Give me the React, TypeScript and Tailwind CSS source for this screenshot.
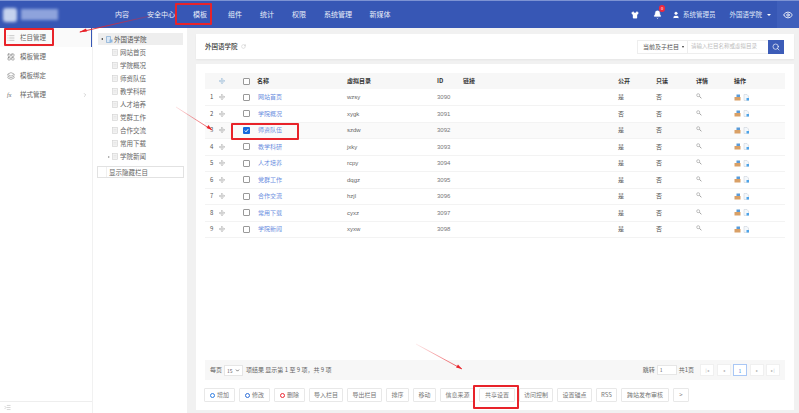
import React from "react";
import { Shirt, Bell, User, Eye, Search, List, LayoutGrid, Layers, ChevronRight, RotateCw, Move, IndentIncrease, ChevronDown } from "lucide-react";

const navItems = [
  { label: "内容", w: "w-[38px]" },
  { label: "安全中心", w: "w-[40px]" },
  { label: "模板", w: "w-[38px]" },
  { label: "组件", w: "w-[32px]" },
  { label: "统计", w: "w-[32px]" },
  { label: "权限", w: "w-[32px]" },
  { label: "系统管理", w: "w-[46px]" },
  { label: "新媒体", w: "w-[38px]" },
];

const rows = [
  { no: 1, name: "网站首页", dir: "wzsy", id: 3090, pub: "是" },
  { no: 2, name: "学院概况", dir: "xygk", id: 3091, pub: "否" },
  { no: 3, name: "师资队伍", dir: "szdw", id: 3092, pub: "是", checked: true },
  { no: 4, name: "教学科研", dir: "jxky", id: 3093, pub: "是" },
  { no: 5, name: "人才培养", dir: "rcpy", id: 3094, pub: "是" },
  { no: 6, name: "党群工作", dir: "dqgz", id: 3095, pub: "是" },
  { no: 7, name: "合作交流", dir: "hzjl", id: 3096, pub: "是" },
  { no: 8, name: "常用下载", dir: "cyxz", id: 3097, pub: "是" },
  { no: 9, name: "学院新闻", dir: "xyxw", id: 3098, pub: "是" },
];

const treeItems = ["网站首页", "学院概况", "师资队伍", "教学科研", "人才培养", "党群工作", "合作交流", "常用下载", "学院新闻"];

const actions = [
  { label: "增加", w: "w-[31px]", dot: "border-[#2f7de1]" },
  { label: "修改", w: "w-[31px]", dot: "border-[#2f6fd8]" },
  { label: "删除", w: "w-[31px]", dot: "border-[#ee2a35]" },
  { label: "导入栏目", w: "w-[34px]" },
  { label: "导出栏目", w: "w-[35px]" },
  { label: "排序", w: "w-[23px]" },
  { label: "移动", w: "w-[23px]" },
  { label: "信息来源", w: "w-[35px]" },
  { label: "共享设置", w: "w-[36px]" },
  { label: "访问控制", w: "w-[34px]" },
  { label: "设置锚点", w: "w-[35px]" },
  { label: "RSS", w: "w-[21px]" },
  { label: "跨站发布审核", w: "w-[48px]" },
  { label: ">", w: "w-[16px]" },
];

const PageIcon = () => (
  <svg width="6" height="7" viewBox="0 0 6 7" className="shrink-0">
    <rect x="0.5" y="0.5" width="5" height="6" fill="#f2f2f2" stroke="#d0d0d0" strokeWidth="0.6" />
    <path d="M1.5 2.5h3M1.5 4h3" stroke="#dcdcdc" strokeWidth="0.5" />
  </svg>
);

const OpIcons = () => (
  <div className="flex items-center gap-[1.5px]">
    <svg width="7" height="7" viewBox="0 0 7 7">
      <rect x="2.5" y="0.5" width="3.5" height="3" fill="#5b9bd8" />
      <rect x="0.5" y="3" width="6" height="3.5" fill="#d9a066" />
    </svg>
    <svg width="7" height="7" viewBox="0 0 7 7">
      <path d="M1 .5h3l1.5 1.5v4.5H1z" fill="#f4f8fc" stroke="#c4ccd6" strokeWidth="0.5" />
      <rect x="3.5" y="4" width="2.5" height="2.5" fill="#4da3e8" />
    </svg>
  </div>
);

const MagIcon = () => (
  <svg width="6" height="6" viewBox="0 0 6 6" className="-mt-[2px]">
    <circle cx="2.2" cy="2.2" r="1.5" fill="none" stroke="#a8a8a8" strokeWidth="0.7" />
    <path d="M3.4 3.4 5.4 5.2" stroke="#909090" strokeWidth="0.9" />
  </svg>
);

const Annotations = () => (
  <>
    <div className="absolute left-[175px] top-[3px] w-[37px] h-[22px] border-2 border-[#e8232a] rounded-[1px]" />
    <div className="absolute left-[4px] top-[28px] w-[50px] h-[18px] border-2 border-[#e8232a] rounded-[1px]" />
    <div className="absolute left-[231px] top-[123px] w-[68px] h-[17px] border-2 border-[#e8232a] rounded-[1px]" />
    <div className="absolute left-[473px] top-[385px] w-[46px] h-[24px] border-2 border-[#e8232a] rounded-[1px]" />
    <svg className="absolute inset-0 pointer-events-none" width="799" height="413" viewBox="0 0 799 413">
      <defs>
        <linearGradient id="a1" gradientUnits="userSpaceOnUse" x1="150" y1="16" x2="80" y2="32">
          <stop offset="0" stopColor="#e8232a" stopOpacity="0.3" />
          <stop offset="1" stopColor="#e8232a" />
        </linearGradient>
        <linearGradient id="a2" gradientUnits="userSpaceOnUse" x1="176" y1="107" x2="212" y2="130">
          <stop offset="0" stopColor="#e8232a" stopOpacity="0.15" />
          <stop offset="1" stopColor="#e8232a" />
        </linearGradient>
        <linearGradient id="a3" gradientUnits="userSpaceOnUse" x1="416" y1="344" x2="462" y2="369">
          <stop offset="0" stopColor="#e8232a" stopOpacity="0.1" />
          <stop offset="1" stopColor="#e8232a" />
        </linearGradient>
      </defs>
      <path d="M150 16 80 32" stroke="url(#a1)" strokeWidth="1.2" fill="none" />
      <path d="M79 32.2 86 28.5 87 31.5Z" fill="#e8232a" />
      <path d="M176 107 212 130" stroke="url(#a2)" strokeWidth="0.8" fill="none" />
      <path d="M212 130 206.5 128 208.5 125Z" fill="#e8232a" />
      <path d="M416 344 462 369" stroke="url(#a3)" strokeWidth="0.8" fill="none" />
      <path d="M462 369 456 367.5 458 364.5Z" fill="#e8232a" />
    </svg>
  </>
);

export default function App() {
  return (
    <div className="relative w-[799px] h-[413px] overflow-hidden bg-[#f1f1f1] text-[#666] text-[6px] leading-none font-['Noto_Sans_CJK_SC','Noto_Sans',sans-serif]">
      {/* top bar */}
      <header className="h-[28px] flex items-center bg-[#3757b5] border-t border-[#7d93d3] text-white">
        <div className="w-[103px] h-full flex items-center pl-[3px] gap-[4px] blur-[1.5px]">
          <div className="w-[14px] h-[14px] rounded-[3px] bg-[#c5d2ee]" />
          <div className="w-[37px] h-[11px] bg-[#8ea3dc]" />
        </div>
        <nav className="flex items-center h-full text-[7px] text-[#e9eef9]">
          {navItems.map((n) => (
            <div key={n.label} className={`${n.w} text-center whitespace-nowrap`}>
              {n.label}
            </div>
          ))}
        </nav>
        <div className="ml-auto flex items-center h-full">
          <Shirt size={8} fill="white" strokeWidth={1} />
          <div className="relative ml-[14px] mr-[10px]">
            <Bell size={9} fill="white" strokeWidth={1} />
            <span className="absolute -top-[5px] -right-[3px] w-[6px] h-[7px] rounded-full bg-[#f0283c] text-[4px] text-center leading-[7px]">0</span>
          </div>
          <User size={8} fill="white" strokeWidth={1} className="mr-[3px]" />
          <span className="text-[6.5px] text-[#dfe6f7] whitespace-nowrap">系统管理员</span>
          <span className="ml-[14px] text-[6.5px] text-[#dfe6f7] whitespace-nowrap">外国语学院</span>
          <span className="ml-[5px] mr-[6px] w-0 h-0 border-x-[2px] border-x-transparent border-t-[2.5px] border-t-white" />
          <div className="w-[22px] h-full bg-[#3f5fbb] flex items-center justify-center">
            <Eye size={10} strokeWidth={2} />
          </div>
        </div>
      </header>

      <div className="flex h-[385px]">
        {/* side menu */}
        <aside className="w-[92px] bg-white flex flex-col text-[6.5px] text-[#666] shadow-[1px_0_2px_rgba(0,0,0,0.05)]">
          <div className="h-[19px] flex items-center pl-[7px] gap-[5px] border-r border-[#3757b5] bg-[#fafafa]">
            <List size={8} strokeWidth={1} />
            <span>栏目管理</span>
          </div>
          <div className="h-[19px] flex items-center pl-[7px] gap-[5px]">
            <LayoutGrid size={8} strokeWidth={1.5} />
            <span>模板管理</span>
          </div>
          <div className="h-[19px] flex items-center pl-[7px] gap-[5px]">
            <Layers size={8} strokeWidth={1.5} />
            <span>模板绑定</span>
          </div>
          <div className="h-[19px] flex items-center pl-[7px] gap-[5px]">
            <span className="w-[8px] text-[6px] italic font-['Liberation_Serif',serif]">fx</span>
            <span>样式管理</span>
            <ChevronRight size={6} className="ml-auto mr-[4px] text-[#aaa]" />
          </div>
          <div className="mt-auto h-[12px] border-t border-[#eee] pl-[4px] flex items-center">
            <IndentIncrease size={7} strokeWidth={1} className="text-[#777]" />
          </div>
        </aside>

        {/* tree */}
        <section className="w-[95px] bg-white pt-[5px] pl-[5px] border-l border-[#f1f1f1]">
          <div className="w-[85px] h-[12px] bg-[#eeeeee] flex items-center pl-[3px] text-[6.5px] text-[#555]">
            <span className="w-0 h-0 border-y-[1.5px] border-y-transparent border-r-[2px] border-r-[#333] mr-[3px]" />
            <svg width="7" height="7" viewBox="0 0 7 7" className="mr-[1px]">
              <path d="M.5.5h4v6h-4z" fill="#dce8f5" stroke="#6f9fd0" strokeWidth="0.6" />
              <rect x="3.5" y="3.5" width="3" height="3" fill="#8fb8e0" />
            </svg>
            外国语学院
          </div>
          <ul className="pt-[1px]">
            {treeItems.map((t, i) => (
              <li key={t} className="h-[13px] flex items-center pl-[14px] gap-[2px] relative text-[6.5px] text-[#666]">
                {i === 8 && (
                  <span className="absolute left-[10px] w-0 h-0 border-y-[1.5px] border-y-transparent border-l-[2px] border-l-[#999]" />
                )}
                <PageIcon />
                {t}
              </li>
            ))}
          </ul>
          <div className="mt-[3px] -ml-[1px] w-[87px] h-[12px] border border-[#e2e2e2] flex items-center text-[6.5px] text-[#666]">
            <span className="w-[9px] h-full border-r border-[#f0f0f0] mr-[2px]" />
            显示隐藏栏目
          </div>
        </section>

        {/* main */}
        <main className="flex-1 pl-[9px] pr-[5px] pt-[6px] pb-[3px] flex flex-col gap-[5px]">
          <div className="h-[25px] bg-white flex items-center pl-[9px] pr-[10px] shadow-[0_1px_2px_rgba(0,0,0,0.05)]">
            <span className="text-[6.5px] text-[#333] font-medium">外国语学院</span>
            <RotateCw size={5} className="ml-[3px] text-[#bbb]" />
            <div className="ml-auto flex h-[14px] items-stretch">
              <div className="w-[51px] border border-[#eee] flex items-center pl-[5px] text-[6px] text-[#555] whitespace-nowrap">
                当前及子栏目
                <span className="ml-[3px] w-0 h-0 border-x-[1.5px] border-x-transparent border-t-[2px] border-t-[#333]" />
              </div>
              <div className="w-[80px] border-y border-[#eee] flex items-center pl-[3px] text-[5.5px] text-[#bdbdbd] whitespace-nowrap">
                请输入栏目名称或虚拟目录
              </div>
              <div className="w-[16px] bg-[#3c5cb8] flex items-center justify-center text-white">
                <Search size={8} strokeWidth={2} />
              </div>
            </div>
          </div>

          <div className="flex-1 bg-white pl-[9px] pr-[9px] pt-[9px] flex flex-col">
            <table className="w-[580px] table-fixed border-collapse">
              <thead>
                <tr className="h-[16px] bg-[#f7f7f7] text-[#333] text-left">
                  <th className="w-[13px]" />
                  <th className="w-[25px]"><Move size={6} strokeWidth={2} className="ml-[1px] text-[#7fa8cf]" /></th>
                  <th className="w-[14px]"><div className="w-[7px] h-[7px] border border-[#999] rounded-[1px] bg-white" /></th>
                  <th className="w-[90px] font-bold">名称</th>
                  <th className="w-[90px] font-bold">虚拟目录</th>
                  <th className="w-[26px] font-bold">ID</th>
                  <th className="w-[155px] font-bold">链接</th>
                  <th className="w-[38px] font-bold">公开</th>
                  <th className="w-[40px] font-bold">只读</th>
                  <th className="w-[38px] font-bold">详情</th>
                  <th className="font-bold">操作</th>
                </tr>
              </thead>
              <tbody>
                {rows.map((r) => (
                  <tr key={r.no} className={`h-[16.5px] border-b border-[#f3f3f3] ${r.checked ? "bg-[#fafafa]" : ""}`}>
                    <td className="pl-[5px] text-[#555]">{r.no}</td>
                    <td><Move size={6} strokeWidth={2} className="ml-[1px] text-[#999]" /></td>
                    <td>
                      {r.checked ? (
                        <div className="w-[7px] h-[7px] rounded-[1px] bg-[#1668dc] flex items-center justify-center">
                          <svg width="5" height="5" viewBox="0 0 5 5">
                            <path d="M.8 2.6 2 3.8 4.2 1.2" stroke="#fff" strokeWidth="1" fill="none" />
                          </svg>
                        </div>
                      ) : (
                        <div className="w-[7px] h-[7px] border border-[#999] rounded-[1px] bg-white" />
                      )}
                    </td>
                    <td className="pl-[1px] text-[#6b8ee0]">{r.name}</td>
                    <td className="text-[#666] font-['Liberation_Sans',sans-serif]">{r.dir}</td>
                    <td className="text-[#777] font-['Liberation_Sans',sans-serif]">{r.id}</td>
                    <td />
                    <td className="text-[#555]">{r.pub}</td>
                    <td className="text-[#555]">否</td>
                    <td><MagIcon /></td>
                    <td><OpIcons /></td>
                  </tr>
                ))}
              </tbody>
            </table>

            <div className="mt-auto w-[580px] h-[20px] bg-[#f7f7f7] flex items-center pl-[5px] pr-[5px] text-[#666]">
              <span>每页</span>
              <div className="ml-[2px] mr-[3px] w-[19px] h-[11px] bg-white border border-[#e6e6e6] flex items-center justify-between px-[2px] text-[5px]">
                15
                <ChevronDown size={5} strokeWidth={3} className="text-[#333]" />
              </div>
              <span>项结果 显示第 1 至 9 项，共 9 项</span>
              <div className="ml-auto flex items-center">
                <span>跳转</span>
                <div className="ml-[2px] mr-[2px] w-[20px] h-[10px] bg-white border border-[#e6e6e6] pl-[2px] text-[5px] leading-[8px]">1</div>
                <span>共1页</span>
                <div className="ml-[6px] flex gap-[2.5px]">
                  {["|◂", "◂", "1", "▸", "▸|"].map((p) => (
                    <div
                      key={p}
                      className={`w-[14px] h-[12px] flex items-center justify-center text-[4px] bg-white border ${p === "1" ? "border-[#a9c7f5] text-[#3c7be0] text-[5px]" : "border-[#f0f0f0] text-[#aaa]"}`}
                    >
                      {p}
                    </div>
                  ))}
                </div>
              </div>
            </div>

            <div className="mt-[8px] mb-[8px] -ml-[1px] flex gap-[4px]">
              {actions.map((a) => (
                <div
                  key={a.label}
                  className={`${a.w} h-[14px] shrink-0 flex items-center justify-center gap-[2px] bg-white border border-[#e8e8e8] rounded-[1px] text-[6px] text-[#777] whitespace-nowrap`}
                >
                  {a.dot && <span className={`w-[5px] h-[5px] rounded-full border-[1.5px] ${a.dot}`} />}
                  {a.label}
                </div>
              ))}
            </div>
          </div>
        </main>
      </div>

      <Annotations />
    </div>
  );
}
